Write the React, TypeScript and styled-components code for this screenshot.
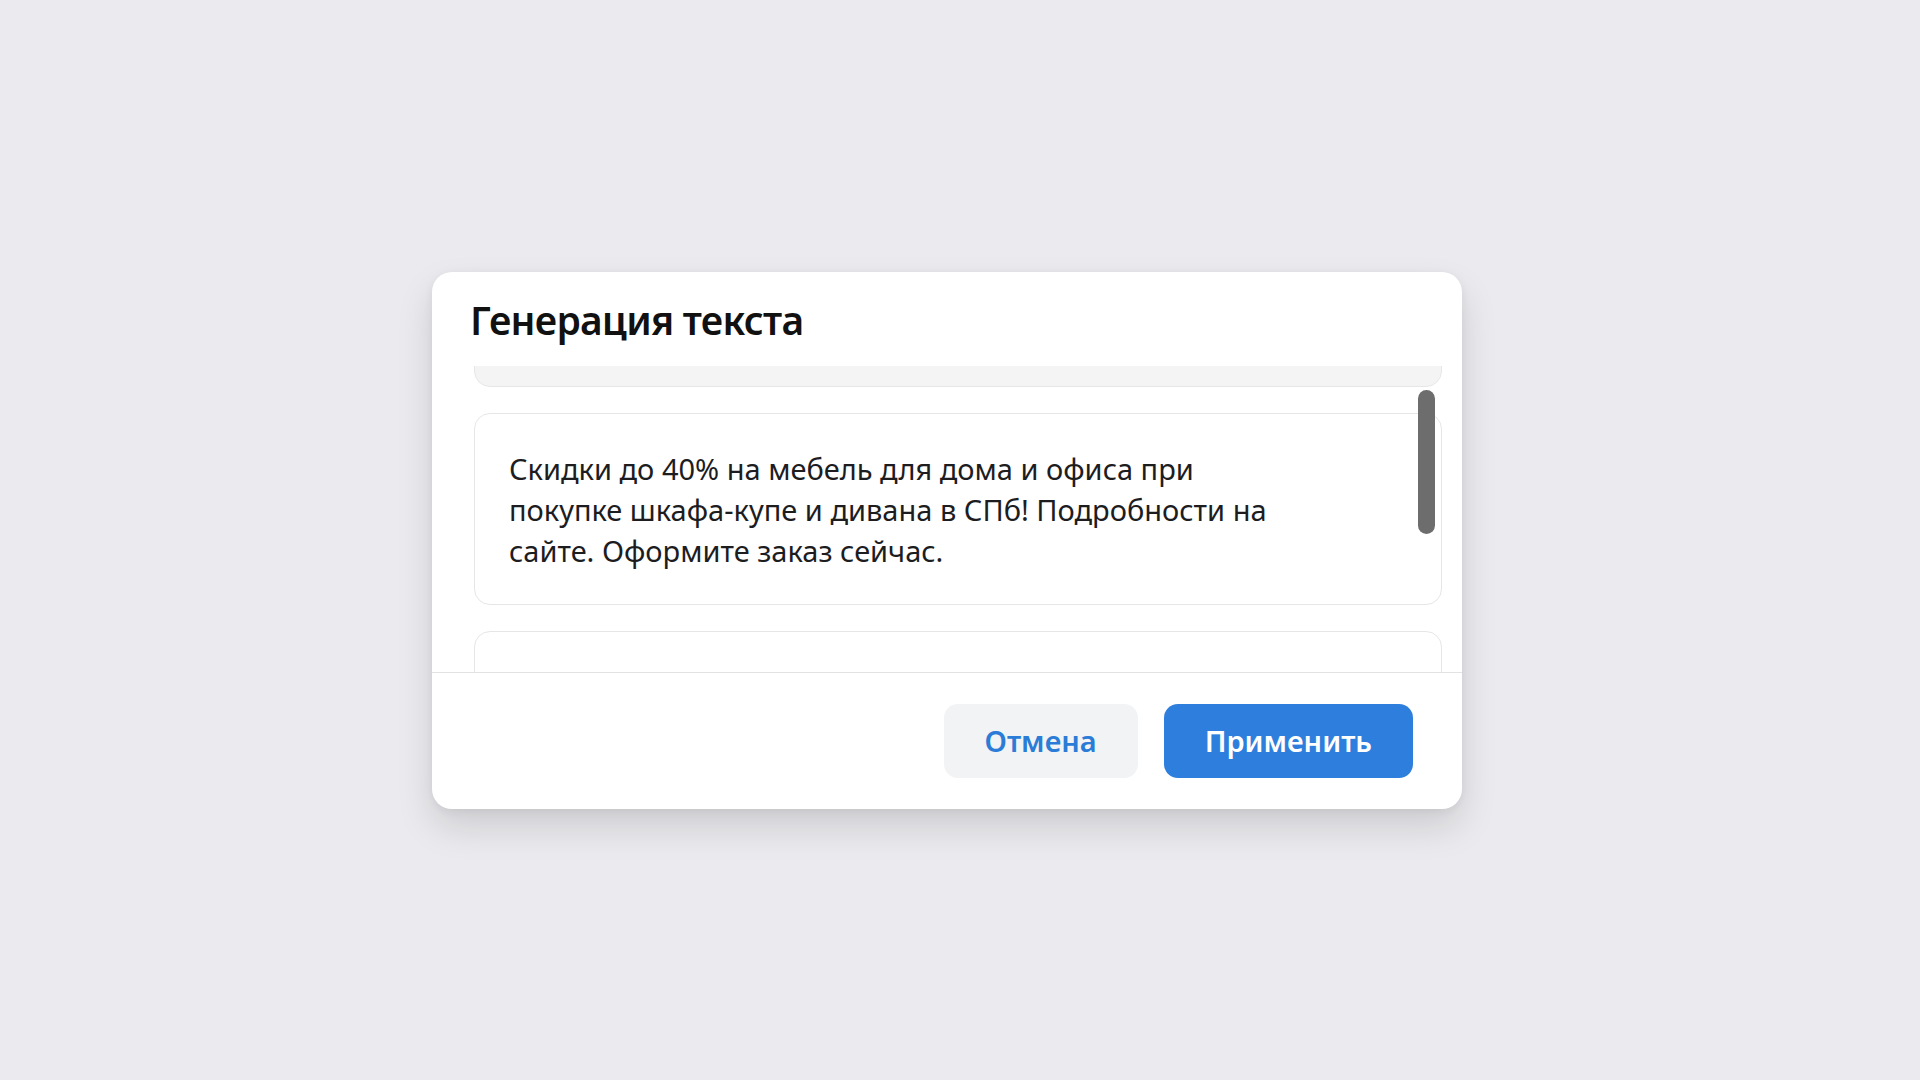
import React, { useEffect, useRef } from 'react';
import styled, { createGlobalStyle } from 'styled-components';

const GlobalStyle = createGlobalStyle`
  html, body {
    margin: 0;
    padding: 0;
    background: #ebebef;
    font-family: "Noto Sans", "Open Sans", sans-serif;
  }
`;

const variants = [
  'Мебель для дома и офиса со скидкой до 40%. Шкафы-купе, диваны и кухни в СПб. Доставка и сборка бесплатно.',
  'Скидки до 40% на мебель для дома и офиса при покупке шкафа-купе и дивана в СПб! Подробности на сайте. Оформите заказ сейчас.',
  'Шкафы-купе и диваны по выгодным ценам в СПб. Скидки до 40% на мебель для дома и офиса. Закажите онлайн.',
];

const Page = styled.div`
  height: 1080px;
  display: flex;
  align-items: center;
  justify-content: center;
  padding-right: 26px;
  box-sizing: border-box;
`;

const Dialog = styled.div`
  width: 1030px;
  background: #fff;
  border-radius: 20px;
  box-shadow: 0 18px 36px rgba(0, 0, 0, 0.13), 0 2px 10px rgba(0, 0, 0, 0.06);
  overflow: hidden;
  display: flex;
  flex-direction: column;
`;

const Header = styled.div`
  padding: 24px 40px 22px 38px;
`;

const Title = styled.h2`
  margin: 0;
  font-size: 39px;
  line-height: 48px;
  font-weight: 600;
  color: #111;
  letter-spacing: -0.7px;
`;

const Viewport = styled.div`
  position: relative;
  height: 306px;
`;

const Scroller = styled.div`
  height: 100%;
  overflow-y: scroll;
  scrollbar-width: none;
  padding: 0 20px 20px 42px;
  box-sizing: border-box;
  &::-webkit-scrollbar {
    display: none;
  }
`;

const List = styled.div`
  display: flex;
  flex-direction: column;
  gap: 26px;
  padding-bottom: 20px;
`;

const Card = styled.div<{ $muted?: boolean }>`
  border: 1px solid #e6e6e8;
  border-radius: 16px;
  background: ${(p) => (p.$muted ? '#f4f4f5' : '#fff')};
  padding: 34px 34px 33px 34px;
`;

const CardText = styled.p`
  margin: 0;
  max-width: 790px;
  font-size: 29px;
  line-height: 41px;
  color: #1d1d1f;
`;

const Thumb = styled.div`
  position: absolute;
  top: 24px;
  right: 27px;
  width: 17px;
  height: 144px;
  border-radius: 9px;
  background: #6d6d6d;
`;

const Footer = styled.div`
  border-top: 1px solid #e2e2e4;
  padding: 31px 49px 31px;
  display: flex;
  justify-content: flex-end;
  gap: 26px;
`;

const Button = styled.button<{ $primary?: boolean }>`
  height: 74px;
  padding: 0 41px;
  border: none;
  border-radius: 14px;
  font-family: "Noto Sans", "Open Sans", sans-serif;
  font-size: 29px;
  font-weight: 600;
  cursor: pointer;
  background: ${(p) => (p.$primary ? '#2e7fdd' : '#f1f3f5')};
  color: ${(p) => (p.$primary ? '#fff' : '#2b7cd7')};
`;

export default function App() {
  const scrollRef = useRef<HTMLDivElement>(null);

  useEffect(() => {
    const el = scrollRef.current;
    if (!el) return;
    const first = el.querySelector('[data-card]') as HTMLElement | null;
    if (first) el.scrollTop = first.offsetHeight - 21;
  }, []);

  return (
    <>
      <GlobalStyle />
      <Page>
        <Dialog>
          <Header>
            <Title>Генерация текста</Title>
          </Header>
          <Viewport>
            <Scroller ref={scrollRef}>
              <List>
                {variants.map((text, i) => (
                  <Card key={i} data-card $muted={i === 0}>
                    <CardText>{text}</CardText>
                  </Card>
                ))}
              </List>
            </Scroller>
            <Thumb />
          </Viewport>
          <Footer>
            <Button>Отмена</Button>
            <Button $primary>Применить</Button>
          </Footer>
        </Dialog>
      </Page>
    </>
  );
}
